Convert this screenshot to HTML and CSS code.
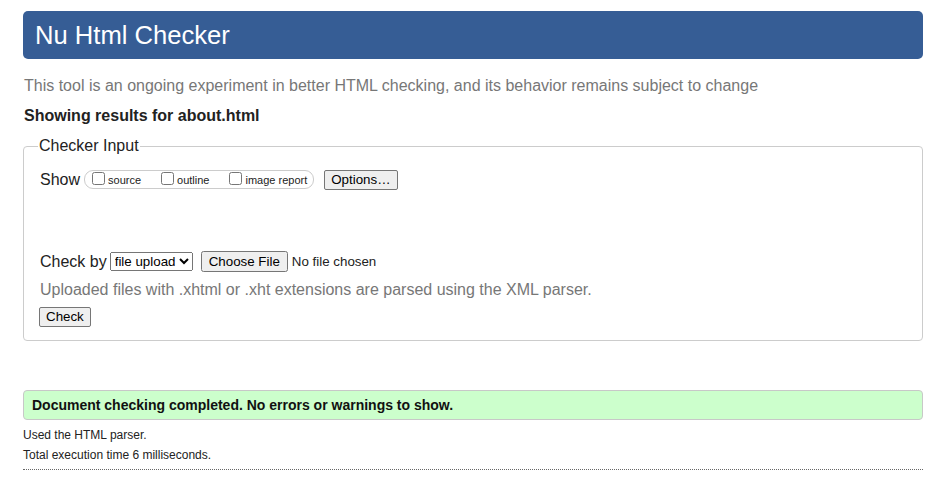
FILE: index.html
```html
<!DOCTYPE html>
<html lang="en">
<head>
<meta charset="utf-8">
<title>Nu Html Checker</title>
<link rel="stylesheet" href="styles.css">
</head>
<body>
<div class="page">
  <h1 class="masthead">Nu Html Checker</h1>
  <p class="tagline">This tool is an ongoing experiment in better HTML checking, and its behavior remains subject to change</p>
  <p class="results-for">Showing results for about.html</p>
  <fieldset class="checker">
    <legend class="checker-legend">Checker Input</legend>
    <div class="show-row">
      <span class="row-label">Show</span>
      <span class="show-group">
        <label class="opt"><input type="checkbox" class="cb">source</label>
        <label class="opt"><input type="checkbox" class="cb">outline</label>
        <label class="opt"><input type="checkbox" class="cb">image report</label>
      </span>
      <button type="button" class="btn options-btn">Options…</button>
    </div>
    <div class="checkby-row">
      <span class="row-label">Check by</span>
      <select class="mode-select"><option>file upload</option></select>
      <input type="file" class="file-input">
    </div>
    <p class="hint">Uploaded files with .xhtml or .xht extensions are parsed using the XML parser.</p>
    <div class="submit-row"><button type="button" class="btn check-btn">Check</button></div>
  </fieldset>
  <p class="success">Document checking completed. No errors or warnings to show.</p>
  <p class="details">Used the HTML parser.</p>
  <p class="details">Total execution time 6 milliseconds.</p>
  <hr class="rule">
</div>
</body>
</html>
```
FILE: styles.css
```css
html, body {
  margin: 0;
  padding: 0;
  background: #fff;
}
body {
  font-family: "Liberation Sans", Arial, sans-serif;
  color: #222;
}
.page {
  width: 900px;
  padding: 11px 0 0 23px;
}
.masthead {
  margin: 0;
  height: 48px;
  box-sizing: border-box;
  padding: 0 12px;
  display: flex;
  align-items: center;
  background: #365d95;
  color: #fff;
  font-size: 25.6px;
  font-weight: normal;
  border-radius: 5px;
}
.tagline {
  margin: 18px 0 0 1px;
  font-size: 16px;
  line-height: 18px;
  color: #777;
}
.results-for {
  margin: 12px 0 0 1px;
  font-size: 16px;
  line-height: 18px;
  font-weight: bold;
  color: #222;
}
.checker {
  margin: 12px 0 0 0;
  padding: 0 16px 13px 16px;
  border: 1px solid #ccc;
  border-radius: 4px;
  width: 900px;
  box-sizing: border-box;
}
.checker-legend {
  padding: 0 1px;
  margin-left: -2px;
  font-size: 16px;
  line-height: 18px;
  color: #222;
}
.show-row {
  margin-top: 15px;
  display: flex;
  align-items: center;
  height: 19px;
}
.row-label {
  font-size: 16px;
  line-height: 18px;
  margin-right: 4px;
}
.show-group {
  display: flex;
  align-items: center;
  height: 19px;
  box-sizing: border-box;
  border: 1px solid #ccc;
  border-radius: 9px;
  padding: 0 6px 0 7px;
  gap: 20px;
  font-size: 11px;
}
.opt {
  display: flex;
  align-items: center;
}
.cb {
  margin: -3px 3px 0 0;
  width: 13px;
  height: 13px;
}
.btn {
  font-family: "Liberation Sans", Arial, sans-serif;
  font-size: 13.33px;
  color: #000;
  background: #efefef;
  border: 1px solid #767676;
  border-radius: 2px;
  padding: 1px 6px;
  height: 20px;
  line-height: 16px;
}
.options-btn {
  margin-left: 10px;
}
.checkby-row {
  margin-top: 63px;
  display: flex;
  align-items: center;
  height: 19px;
  font-size: 13.33px;
}
.mode-select {
  font-family: "Liberation Sans", Arial, sans-serif;
  font-size: 13.33px;
  height: 19px;
  margin-right: 8px;
  margin-left: -1px;
}
.file-input {
  font-family: "Liberation Sans", Arial, sans-serif;
  font-size: 13.33px;
}
.hint {
  margin: 10px 0 0 0;
  font-size: 16px;
  line-height: 18px;
  color: #777;
}
.submit-row {
  margin-top: 8px;
  display: flex;
}
.check-btn {
  margin-left: -1px;
}
.success {
  margin: 49px 0 0 0;
  height: 30px;
  box-sizing: border-box;
  display: flex;
  align-items: center;
  padding: 0 8px;
  background: #ccffcc;
  border: 1px solid #c8c8c8;
  border-radius: 4px;
  font-size: 14px;
  font-weight: bold;
  color: #111;
}
.details {
  margin: 8px 0 0 0;
  font-size: 12px;
  line-height: 14px;
  color: #222;
}
.details + .details {
  margin-top: 6px;
}
.rule {
  margin: 7px 0 0 0;
  border: 0;
  border-top: 1px dotted #666;
  height: 0;
}
```
